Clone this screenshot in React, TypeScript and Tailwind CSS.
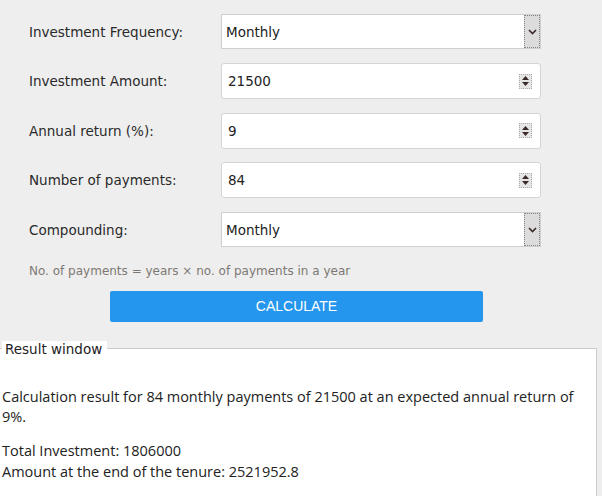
import React from "react";

const labelFont = { fontFamily: '"DejaVu Sans", Verdana, sans-serif' };

function SelectBox({ value }: { value: string }) {
  return (
    <div className="flex h-[35px] w-[320px] border border-[#cfcfcf] bg-white">
      <div className="flex flex-1 items-center pl-[4px] pt-[1px] text-[13.5px] text-[#222]" style={labelFont}>
        {value}
      </div>
      <div className="flex w-[16px] items-center justify-center border border-dotted border-[#8a8080] bg-[#dcdcdc]">
        <svg width="9" height="6" viewBox="0 0 9 6">
          <path d="M1 1 L4.5 4.5 L8 1" stroke="#3a2a2a" strokeWidth="1.6" fill="none" />
        </svg>
      </div>
    </div>
  );
}

function NumberBox({ value }: { value: string }) {
  return (
    <div className="flex h-[36px] w-[320px] items-center rounded-[3px] border border-[#d4d4d4] bg-white pr-[8px]">
      <div className="flex-1 pl-[6px] pt-[1px] text-[13.5px] text-[#222]" style={labelFont}>
        {value}
      </div>
      <div className="flex h-[15px] w-[13px] flex-col items-center justify-center gap-[2px] border border-dotted border-[#b0a8a8] bg-[#e6e6e6]">
        <svg width="7" height="4" viewBox="0 0 7 4">
          <path d="M0 4 L3.5 0 L7 4 Z" fill="#3a2a2a" />
        </svg>
        <svg width="7" height="4" viewBox="0 0 7 4">
          <path d="M0 0 L3.5 4 L7 0 Z" fill="#3a2a2a" />
        </svg>
      </div>
    </div>
  );
}

function Row({ label, children, h }: { label: string; children: React.ReactNode; h: string }) {
  return (
    <div className={`mt-[14px] flex items-center ${h}`}>
      <div className="w-[221px] shrink-0 pl-[29px] pt-[1px] text-[13.5px] text-[#2a2a2a]" style={labelFont}>
        {label}
      </div>
      {children}
    </div>
  );
}

export default function App() {
  return (
    <div className="h-[496px] w-[602px] overflow-hidden bg-[#eeeeee]">
      <Row label="Investment Frequency:" h="h-[35px]">
        <SelectBox value="Monthly" />
      </Row>
      <Row label="Investment Amount:" h="h-[36px]">
        <NumberBox value="21500" />
      </Row>
      <Row label="Annual return (%):" h="h-[35px]">
        <NumberBox value="9" />
      </Row>
      <Row label="Number of payments:" h="h-[36px]">
        <NumberBox value="84" />
      </Row>
      <Row label="Compounding:" h="h-[35px]">
        <SelectBox value="Monthly" />
      </Row>
      <div className="mt-[15px] pl-[29px] text-[12px] leading-[18px] text-[#7d7873]" style={labelFont}>
        No. of payments = years × no. of payments in a year
      </div>
      <div className="mt-[11px] flex justify-start pl-[110px]">
        <div
          className="flex h-[31px] w-[373px] items-center justify-center rounded-[2px] bg-[#2596ee] text-[14px] text-white"
          style={{ fontFamily: '"Liberation Sans", Arial, sans-serif' }}
        >
          CALCULATE
        </div>
      </div>
      <div className="relative mt-[26px] h-[200px] w-[597px] border-t border-r border-[#cccccc] bg-white">
        <div
          className="absolute left-[2px] top-[-8px] bg-white pl-[3px] pr-[5px] text-[13.5px] leading-[16px] text-[#222]"
          style={labelFont}
        >
          Result window
        </div>
        <div
          className="pl-[2px] pr-[22px] pt-[38px] text-[14.5px] leading-[20px] text-[#222]"
          style={{ fontFamily: '"Open Sans", Arial, sans-serif' }}
        >
          <p>Calculation result for 84 monthly payments of 21500 at an expected annual return of 9%.</p>
          <p className="mt-[14px]">Total Investment: 1806000</p>
          <p className="mt-[1px]">Amount at the end of the tenure: 2521952.8</p>
        </div>
      </div>
    </div>
  );
}
